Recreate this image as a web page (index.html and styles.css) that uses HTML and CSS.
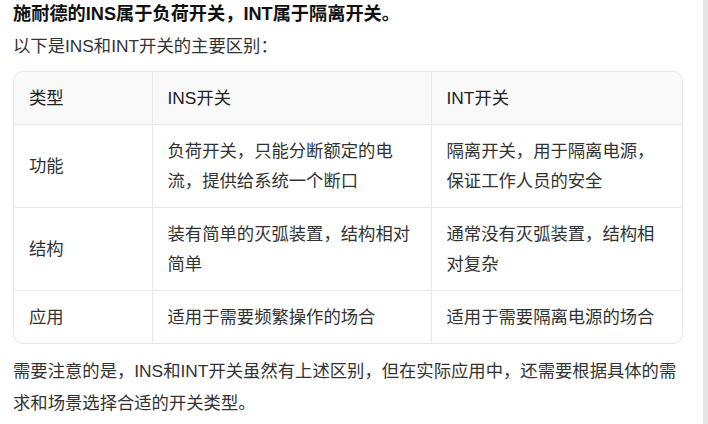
FILE: index.html
```html
<!DOCTYPE html>
<html lang="zh-CN">
<head>
<meta charset="utf-8">
<link rel="stylesheet" href="styles.css">
</head>
<body>
<div class="page">
  <main class="content">
    <h3 class="title"><span class="mark">施耐德的INS属于负荷开关，INT属于隔离开关。</span></h3>
    <p class="intro">以下是INS和INT开关的主要区别：</p>
    <div class="table-wrap">
      <table class="cmp">
        <colgroup><col class="c1"><col class="c2"><col class="c3"></colgroup>
        <thead>
          <tr><th>类型</th><th>INS开关</th><th>INT开关</th></tr>
        </thead>
        <tbody>
          <tr><td>功能</td><td>负荷开关，只能分断额定的电流，提供给系统一个断口</td><td>隔离开关，用于隔离电源，保证工作人员的安全</td></tr>
          <tr><td>结构</td><td>装有简单的灭弧装置，结构相对简单</td><td>通常没有灭弧装置，结构相对复杂</td></tr>
          <tr><td>应用</td><td>适用于需要频繁操作的场合</td><td>适用于需要隔离电源的场合</td></tr>
        </tbody>
      </table>
    </div>
    <p class="note">需要注意的是，INS和INT开关虽然有上述区别，但在实际应用中，还需要根据具体的需求和场景选择合适的开关类型。</p>
  </main>
  <div class="scrollbar"></div>
</div>
</body>
</html>
```
FILE: styles.css
```css
html, body {
  margin: 0;
  padding: 0;
  background: #fff;
}
body {
  font-family: "Liberation Sans", "Noto Sans CJK SC", sans-serif;
  font-size: 17.33px;
  color: #333;
}
.page {
  display: flex;
  height: 424px;
  overflow: hidden;
}
.content {
  width: 670px;
  padding-left: 13px;
  flex: none;
}
.scrollbar {
  width: 5px;
  margin-left: 20px;
  background: #e6e6e6;
  flex: none;
}
.title {
  margin: 0;
  font-size: 18.2px;
  line-height: 28px;
  font-weight: bold;
  color: #111;
}
.mark {
  padding-right: 6px;
  background: linear-gradient(to bottom, transparent 21px, #dde8fa 21px, #dde8fa 25px, transparent 25px);
}
.intro {
  margin: 2px 0 0;
  line-height: 32px;
}
.table-wrap {
  margin-top: 9px;
  border: 1px solid #e6e6e6;
  border-radius: 10px;
  overflow: hidden;
}
.cmp {
  width: 100%;
  border-collapse: collapse;
  table-layout: fixed;
}
.c1 { width: 138px; }
.c2 { width: 279px; }
.cmp th, .cmp td {
  padding: 11px 15px;
  line-height: 30px;
  text-align: left;
  vertical-align: middle;
  font-weight: normal;
  border: 1px solid #e8e8e8;
}
.cmp tr > :first-child { border-left: none; }
.cmp tr > :last-child { border-right: none; }
.cmp thead th { border-top: none; background: #f9f9f9; color: #222; }
.cmp tbody tr:last-child td { border-bottom: none; }
.note {
  margin: 11px 0 0;
  line-height: 32px;
}
```
